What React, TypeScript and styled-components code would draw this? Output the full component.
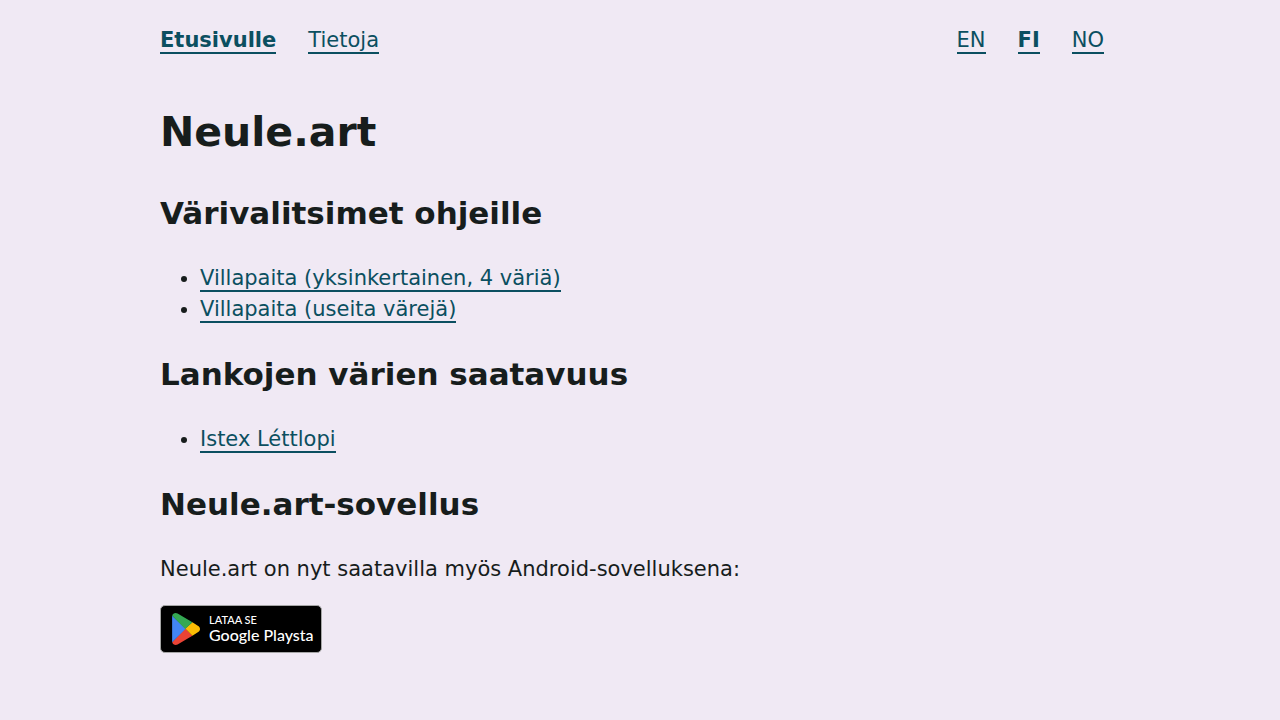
import React from "react";
import styled, { createGlobalStyle } from "styled-components";

const GlobalStyle = createGlobalStyle`
  body {
    margin: 0;
    background: #f0e9f4;
    color: #171d1c;
    font-family: Verdana, "DejaVu Sans", sans-serif;
    font-size: 21px;
    line-height: 31px;
  }
`;

const Page = styled.div`
  max-width: 960px;
  margin: 0 auto;
`;

const Header = styled.header`
  display: flex;
  flex-wrap: wrap;
  justify-content: space-between;
  padding: 25px 16px 19px 0;
`;

const NavList = styled.ul`
  display: flex;
  gap: 32px;
  margin: 0;
  padding: 0;
  list-style: none;
`;

const TextLink = styled.a<{ $active?: boolean }>`
  color: #0b4f60;
  font-weight: ${({ $active }) => ($active ? 700 : 400)};
  text-decoration: none;
  border-bottom: 2px solid #0b4f60;
`;

const Title = styled.h1`
  margin: 26px 0;
  font-size: 41px;
  line-height: 63px;
`;

const Heading = styled.h2`
  margin: 26px 0;
  font-size: 31px;
  line-height: 47px;
`;

const List = styled.ul`
  margin: 26px 0;
  padding-left: 40px;
`;

const Paragraph = styled.p`
  margin: 26px 0 20px;
`;

const StoreBadge = styled.a`
  display: flex;
  align-items: center;
  gap: 9px;
  box-sizing: border-box;
  width: 162px;
  height: 48px;
  padding-left: 11px;
  border: 1px solid #a6a6a6;
  border-radius: 5px;
  background: #000;
  color: #fff;
  text-decoration: none;
  white-space: nowrap;
`;

const BadgeText = styled.span`
  display: flex;
  flex-direction: column;
  font-family: Lato, sans-serif;
  font-weight: 500;
`;

const BadgeCaption = styled.span`
  font-size: 11px;
  line-height: 12px;
`;

const BadgeName = styled.span`
  font-size: 16px;
  line-height: 18px;
`;

const PlayLogo = () => (
  <svg width="28" height="32" viewBox="0 0 28 32" aria-hidden="true">
    <path d="M13.1 15.3 0.2 29.2C.6 30.8 2.1 31.9 3.7 31.9c.7 0 1.3-.2 1.9-.5l14.8-8.6z" fill="#ea4335" />
    <path d="m26.2 12.9-5.8-3.7-7.2 6.4 7.2 7.2 5.8-3.7c1.1-.6 1.8-1.8 1.8-3.1s-.7-2.5-1.8-3.1z" fill="#fbbc04" />
    <path d="M.2 2.7c-.1.3-.1.6-.1.9v24.7c0 .3 0 .6.1.9l13.5-13.4z" fill="#4285f4" />
    <path d="m13.2 16 7.2-6.8L5.6.6C5 .2 4.4 0 3.7 0 2 0 .6 1.1.2 2.7z" fill="#34a853" />
  </svg>
);

export default function App() {
  return (
    <>
      <GlobalStyle />
      <Page lang="fi">
        <Header>
          <nav aria-label="Sivusto">
            <NavList>
              <li><TextLink href="#etusivu" $active aria-current="page">Etusivulle</TextLink></li>
              <li><TextLink href="#tietoja">Tietoja</TextLink></li>
            </NavList>
          </nav>
          <nav aria-label="Kieli">
            <NavList>
              <li><TextLink href="#en">EN</TextLink></li>
              <li><TextLink href="#fi" $active aria-current="true">FI</TextLink></li>
              <li><TextLink href="#no">NO</TextLink></li>
            </NavList>
          </nav>
        </Header>
        <main>
          <Title>Neule.art</Title>
          <Heading>Värivalitsimet ohjeille</Heading>
          <List>
            <li><TextLink href="#yksinkertainen">Villapaita (yksinkertainen, 4 väriä)</TextLink></li>
            <li><TextLink href="#useita">Villapaita (useita värejä)</TextLink></li>
          </List>
          <Heading>Lankojen värien saatavuus</Heading>
          <List>
            <li><TextLink href="#lettlopi">Istex Léttlopi</TextLink></li>
          </List>
          <Heading>Neule.art-sovellus</Heading>
          <Paragraph>Neule.art on nyt saatavilla myös Android-sovelluksena:</Paragraph>
          <StoreBadge href="#google-play">
            <PlayLogo />
            <BadgeText>
              <BadgeCaption>LATAA SE</BadgeCaption>
              <BadgeName>Google Playsta</BadgeName>
            </BadgeText>
          </StoreBadge>
        </main>
      </Page>
    </>
  );
}
